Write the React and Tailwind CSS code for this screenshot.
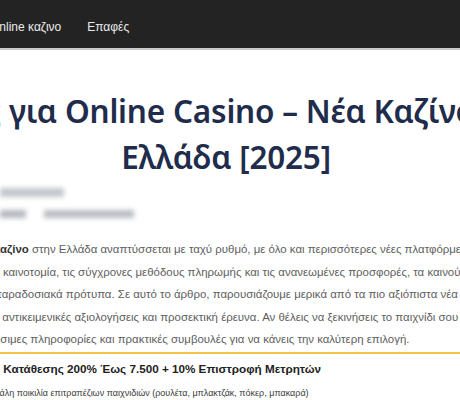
import React from 'react';

const NavBar = () => (
    <div className="h-[50px] bg-[#232323] border-b-2 border-[#c9c9c9] flex items-center pt-[6px]">
        <div className="flex items-center gap-[26px] ml-[-10px] text-[12px] text-[#ececec]">
            <span>Online καζινο</span>
            <span>Επαφές</span>
        </div>
    </div>
);

const Title = () => (
    <div className="w-[900px] ml-[-229px] mt-[38px] text-center text-[31.5px] leading-[46px] font-semibold tracking-[-0.2px] text-[#1f2c4c] whitespace-nowrap font-['Noto_Sans',sans-serif]">
        Οδηγός για Online Casino – Νέα Καζίνο στην
        <br />
        <span className="ml-[10px]">Ελλάδα [2025]</span>
    </div>
);

const Author = () => (
    <div className="mt-[8px] flex flex-col gap-[13px] blur-[2.5px]">
        <div className="w-[64px] h-[9px] bg-[#c4c6cc]" />
        <div className="flex gap-[18px]">
            <div className="w-[26px] h-[8px] bg-[#b4b7bf]" />
            <div className="w-[90px] h-[8px] bg-[#b9bcc3]" />
        </div>
    </div>
);

const lines = [
    <><b className="text-[#333]">καζίνο</b> στην Ελλάδα αναπτύσσεται με ταχύ ρυθμό, με όλο και περισσότερες νέες πλατφόρμες να</>,
    <>ν καινοτομία, τις σύγχρονες μεθόδους πληρωμής και τις ανανεωμένες προσφορές, τα καινούργια</>,
    <>παραδοσιακά πρότυπα. Σε αυτό το άρθρο, παρουσιάζουμε μερικά από τα πιο αξιόπιστα νέα online</>,
    <>ε αντικειμενικές αξιολογήσεις και προσεκτική έρευνα. Αν θέλεις να ξεκινήσεις το παιχνίδι σου σε</>,
    <>ήσιμες πληροφορίες και πρακτικές συμβουλές για να κάνεις την καλύτερη επιλογή.</>,
];

const Intro = () => (
    <div className="mt-[20px] ml-[-6px] whitespace-nowrap text-[11.45px] leading-[22.5px] text-[#5e5e5e]">
        {lines.map((line, i) => (
            <div key={i}>{line}</div>
        ))}
    </div>
);

const Bonus = () => (
    <div className="mt-[1px] border-t-2 border-[#f3c445] whitespace-nowrap">
        <p className="mt-[6px] ml-[-6px] text-[11.7px] leading-[17px] font-bold text-[#222]">
            ς Κατάθεσης 200% Έως 7.500 + 10% Επιστροφή Μετρητών
        </p>
        <p className="mt-[10px] ml-[-5px] text-[9px] leading-[12px] text-[#3a3a3a]">
            γάλη ποικιλία επιτραπέζιων παιχνιδιών (ρουλέτα, μπλακτζάκ, πόκερ, μπακαρά)
        </p>
    </div>
);

export default function App() {
    return (
        <div className="w-[460px] h-[400px] overflow-hidden bg-white font-['Liberation_Sans',Arial,sans-serif]">
            <NavBar />
            <Title />
            <Author />
            <Intro />
            <Bonus />
        </div>
    );
}
